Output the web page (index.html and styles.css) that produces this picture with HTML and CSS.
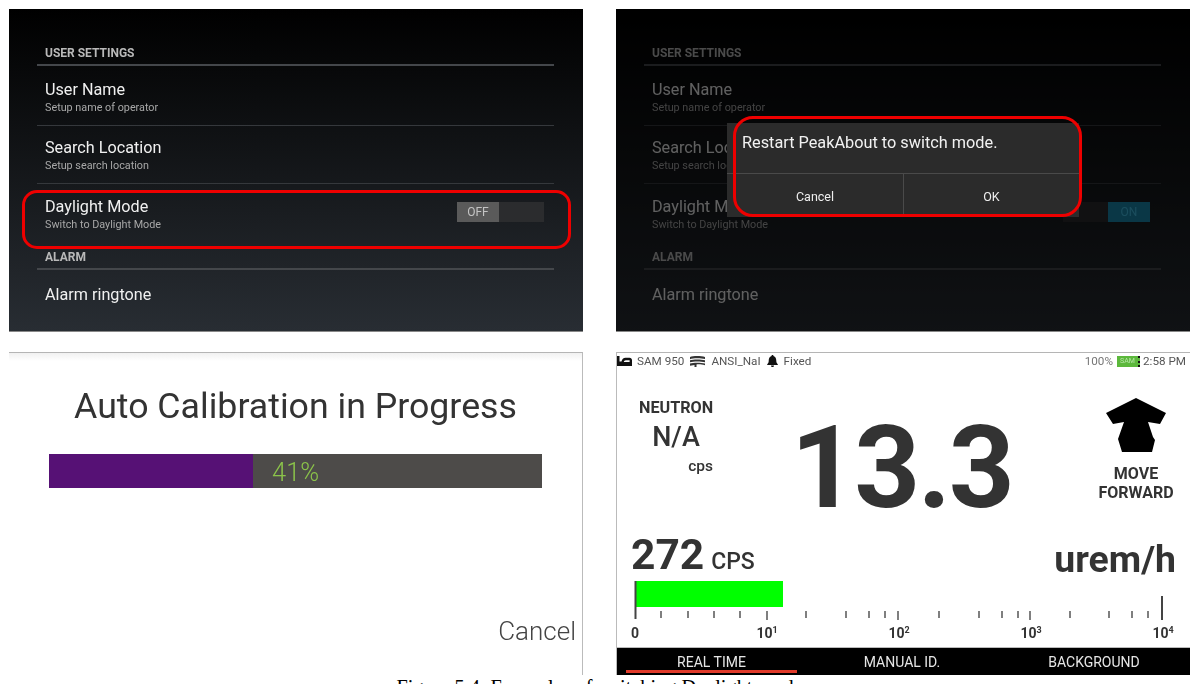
FILE: index.html
```html
<!DOCTYPE html>
<html lang="en">
<head>
<meta charset="utf-8">
<title>Daylight mode</title>
<link rel="stylesheet" href="styles.css">
</head>
<body>
<main class="figure">
  <section class="panel dark">
    <div class="settings">
      <h2 class="section first">USER SETTINGS</h2>
      <div class="row"><div><div class="title">User Name</div><div class="sub">Setup name of operator</div></div></div>
      <div class="row"><div><div class="title">Search Location</div><div class="sub">Setup search location</div></div></div>
      <div class="row plain"><div><div class="title">Daylight Mode</div><div class="sub">Switch to Daylight Mode</div></div>
        <div class="toggle"><span class="thumb">OFF</span></div></div>
      <h2 class="section alarm">ALARM</h2>
      <div class="row plain last"><div class="title">Alarm ringtone</div></div>
    </div>
    <div class="ring ring-row"></div>
  </section>

  <section class="panel dark">
    <div class="settings">
      <h2 class="section first">USER SETTINGS</h2>
      <div class="row"><div><div class="title">User Name</div><div class="sub">Setup name of operator</div></div></div>
      <div class="row"><div><div class="title">Search Location</div><div class="sub">Setup search location</div></div></div>
      <div class="row plain"><div><div class="title">Daylight Mode</div><div class="sub">Switch to Daylight Mode</div></div>
        <div class="toggle on"><span class="thumb">ON</span></div></div>
      <h2 class="section alarm">ALARM</h2>
      <div class="row plain last"><div class="title">Alarm ringtone</div></div>
    </div>
    <div class="scrim"></div>
    <div class="dialog">
      <p class="message">Restart PeakAbout to switch mode.</p>
      <div class="actions"><span class="action">Cancel</span><span class="action">OK</span></div>
    </div>
    <div class="ring ring-dialog"></div>
  </section>

  <section class="panel light calib">
    <h1 class="calib-title">Auto Calibration in Progress</h1>
    <div class="progress"><div class="fill"></div><span class="pct">41%</span></div>
    <div class="cancel">Cancel</div>
  </section>

  <section class="panel light meter">
    <header class="status">
      <div class="status-group">
        <svg class="ico" width="15" height="10" viewBox="0 0 15 10"><path d="M0 0h2.500v5.500h2C5 3.200 6.300 1.800 8.500 1.800h4c1.500 0 2.500 1 2.500 2.500V10H0zM6.800 6h5.800V4.200H8.800C7.700 4.200 7 5 6.800 6z" fill-rule="evenodd" fill="#111"/></svg>
        <span>SAM 950</span>
        <svg class="ico gap" width="17" height="11" viewBox="0 0 17 11"><path d="M1 .9C4-.2 12-.2 16 .9v2.200C12 2 4 2 1 3.200zM1 4.300C4 3.200 12 3.200 16 4.300v1.900C12 5.100 4 5.100 1 6.300zM1 7.500C4 6.400 12 6.400 16 7.500v1.700C12 8.200 9 8.200 7.500 8.600V11H5.500V8.900L1 9.700z" fill="#333"/></svg>
        <span>ANSI_NaI</span>
        <svg class="ico gap-s" width="11" height="12" viewBox="0 0 11 12"><path d="M5.500 0c.6 0 1 .4 1 1C8.500 1.500 9.300 3.500 9.300 6c0 1.500.5 2.400 1.500 3.200v.8H.2v-.8C1.200 8.400 1.700 7.500 1.700 6c0-2.500.8-4.500 2.800-5 0-.6.4-1 1-1zM4 10.500h3C7 11.500 6.300 12 5.500 12S4 11.500 4 10.500z" fill="#111"/></svg>
        <span>Fixed</span>
      </div>
      <div class="status-group">
        <span class="muted">100%</span>
        <span class="battery">SAM</span>
        <span>2:58 PM</span>
      </div>
    </header>

    <div class="hero">
      <div class="neutron">
        <div class="neutron-label">NEUTRON</div>
        <div class="neutron-value">N/A</div>
        <div class="neutron-unit">cps</div>
      </div>
      <div class="dose">13.3</div>
      <div class="move">
        <svg class="arrow" width="60" height="54" viewBox="0 0 60 54"><polygon points="30,0 60,15 54,26 42,24 47,39 49,42 46,54 16,54 12,41 18,24 7,26 0,15" fill="#000"/></svg>
        <div class="move-label">MOVE<br>FORWARD</div>
      </div>
    </div>

    <div class="readout">
      <div class="rate"><span class="rate-num">272</span><span class="rate-unit">CPS</span></div>
      <div class="unit">urem/h</div>
    </div>

    <svg class="scale" width="574" height="40" viewBox="0 0 574 40">
      <rect x="20" y="0" width="147" height="26" fill="#00ff00"/>
      <g stroke="#555" stroke-width="1.500">
        <path d="M45 30v7M72 30v7M98 30v7M124 30v7M190 30v7M230 30v7M253 30v7M269 30v7M323 30v7M363 30v7M386 30v7M402 30v7M454 30v7M493 30v7M516 30v7M532 30v7"/>
        <path d="M151 30v9M282 30v9M414 30v9"/>
      </g>
      <path d="M19.500 0v38M546 15v24" stroke="#444" stroke-width="2"/>
    </svg>
    <div class="scale-labels">
      <span>0</span><span>10<sup>1</sup></span><span>10<sup>2</sup></span><span>10<sup>3</sup></span><span>10<sup>4</sup></span>
    </div>

    <nav class="tabs">
      <span class="tab active">REAL TIME</span>
      <span class="tab">MANUAL ID.</span>
      <span class="tab">BACKGROUND</span>
    </nav>
  </section>
</main>
<p class="caption">Figure 5.4: Examples of switching Daylight mode</p>
</body>
</html>
```
FILE: styles.css
```css
* { box-sizing: border-box; }
html, body { margin: 0; height: 684px; overflow: hidden; background: #fff; }
body { font-family: Roboto, "Liberation Sans", sans-serif; }

.figure {
  display: grid;
  grid-template-columns: 574px 574px;
  grid-template-rows: 323px 323px;
  column-gap: 33px;
  row-gap: 20px;
  padding: 9px 0 0 9px;
}
.panel { position: relative; overflow: hidden; filter: blur(0.45px); }

/* settings screens */
.dark { background: linear-gradient(#000, #282d33); border-bottom: 1px solid #888; }
.settings { padding: 36px 29px 0 28px; }
.section {
  margin: 0 0 2px;
  padding: 0 0 6px 8px;
  height: 21px;
  border-bottom: 2px solid #44474b;
  font-size: 12px;
  line-height: 14px;
  font-weight: 700;
  color: #b9b9b9;
}
.section.first { padding-top: 1px; }
.row {
  display: flex;
  justify-content: space-between;
  height: 58px;
  padding: 12px 10px 0 8px;
  border-bottom: 1px solid #35383c;
}
.row.plain { border-bottom: 0; padding-top: 13px; }
.row.last { height: 40px; padding-top: 13px; }
.title { font-size: 16.2px; line-height: 20px; color: #f0f0f0; }
.sub { font-size: 10.8px; line-height: 16px; color: #a8a8a8; }
.section.alarm { margin-top: 8px; height: 20px; }
.toggle {
  width: 87px;
  height: 20px;
  margin-top: 5px;
  background: #2b2c2e;
  display: flex;
}
.thumb {
  width: 42px;
  background: #5a5a5a;
  color: #c4c4c4;
  font-size: 12px;
  line-height: 20px;
  text-align: center;
}
.toggle.on { justify-content: flex-end; margin-right: 1px; }
.toggle.on .thumb { background: #1a8ab0; color: #43c0e8; }

.ring { position: absolute; border: 3px solid #ee0000; border-radius: 15px; }
.ring-row { left: 13px; top: 181px; width: 549px; height: 59px; }
.ring-dialog { left: 117px; top: 107px; width: 349px; height: 101px; border-radius: 20px; }

.scrim { position: absolute; inset: 0; background: rgba(0, 0, 0, 0.6); }
.dialog {
  position: absolute;
  left: 111px;
  top: 114px;
  width: 352px;
  height: 94px;
  background: #2b2b2b;
  display: flex;
  flex-direction: column;
}
.message {
  margin: 0;
  height: 51px;
  padding: 10px 0 0 15px;
  font-size: 16.3px;
  line-height: 20px;
  color: #f2f2f2;
  border-bottom: 1px solid #4a4a4a;
}
.actions { flex: 1; min-height: 0; display: grid; grid-template-columns: 176px 1fr; }
.action {
  padding-top: 12px;
  font-size: 12.5px;
  line-height: 22px;
  color: #eee;
  text-align: center;
}
.action + .action { border-left: 1px solid #4a4a4a; }

/* calibration */
.light { background: #fff; border-top: 1px solid #b5b5b5; }
.calib {
  border-right: 1px solid #bbb;
  background: linear-gradient(#f1f1f1, #fff 8px);
  display: flex;
  flex-direction: column;
}
.calib-title {
  margin: 30px 0 0;
  font-size: 35.7px;
  line-height: 46px;
  font-weight: 400;
  color: #333;
  text-align: center;
}
.progress {
  display: flex;
  margin: 25px 40px 0;
  height: 34px;
  background: #4d4b49;
}
.fill { width: 204px; background: #561175; }
.pct {
  margin-left: 19px;
  font-size: 25.5px;
  font-weight: 300;
  line-height: 36px;
  color: #8bc34a;
}
.cancel {
  margin: 128px 6px 0 0;
  text-align: right;
  font-size: 26px;
  font-weight: 300;
  line-height: 30px;
  color: #444;
}

/* live meter */
.meter { border-left: 1px solid #bbb; display: flex; flex-direction: column; }
.status {
  flex: none;
  display: flex;
  justify-content: space-between;
  height: 17px;
  padding: 1px 4px 0 0;
  font-size: 11.7px;
  line-height: 14px;
  color: #555;
}
.status-group { display: flex; align-items: center; height: 14px; }
.ico { flex: none; margin-right: 5px; }
.ico.gap { margin-left: 5px; }
.ico.gap-s { margin-left: 6px; margin-right: 6px; }
.muted { color: #777; }
.battery {
  width: 23px;
  height: 11px;
  margin: 0 3px 0 4px;
  background: #5cb83c;
  border-right: 2px dotted #111;
  color: #b7e6a7;
  font-size: 7px;
  line-height: 11px;
  text-align: center;
}

.hero {
  flex: none;
  display: flex;
  justify-content: space-between;
  height: 161px;
  padding: 0 14px 0 22px;
}
.neutron { width: 74px; padding-top: 28px; color: #333; text-align: center; }
.neutron-label { font-size: 16.2px; line-height: 20px; font-weight: 700; white-space: nowrap; }
.neutron-value { margin-top: 4px; font-size: 27px; line-height: 30px; font-weight: 500; }
.neutron-unit { margin-top: 5px; font-size: 15.5px; line-height: 18px; text-align: right; font-weight: 500; }
.dose {
  margin: 30px 6px 0 0;
  font-size: 115px;
  line-height: 135px;
  font-weight: 700;
  letter-spacing: -2.5px;
  color: #333;
}
.move { width: 80px; padding-top: 28px; text-align: center; color: #333; }
.arrow { display: block; margin: 0 auto 13px; }
.move-label { font-size: 16px; line-height: 18.5px; font-weight: 700; }

.readout {
  flex: none;
  display: flex;
  justify-content: space-between;
  align-items: flex-start;
  height: 50px;
  padding: 1px 14px 0 14px;
  color: #333;
}
.rate { line-height: 46px; }
.rate-num { font-size: 42.5px; font-weight: 700; }
.rate-unit { margin-left: 7px; font-size: 23px; font-weight: 500; }
.unit { margin-top: 4px; font-size: 37.4px; line-height: 46px; font-weight: 700; }

.scale { display: block; flex: none; margin-left: -1px; }
.scale-labels {
  flex: none;
  display: flex;
  justify-content: space-between;
  padding: 0 12px 0 3px;
  height: 26px;
  color: #333;
  font-size: 14px;
  line-height: 24px;
  font-weight: 700;
}
.scale-labels span { width: 30px; text-align: center; }
.scale-labels sup { font-size: 9px; line-height: 0; vertical-align: 5px; }

.tabs {
  flex: 1;
  min-height: 0;
  display: grid;
  grid-template-columns: 189px 192px 1fr;
  background: #000;
  border-top: 1px solid #bbb;
}
.tab {
  position: relative;
  color: #e6e6e6;
  font-size: 14px;
  line-height: 28px;
  text-align: center;
}
.tab.active::after {
  content: "";
  position: absolute;
  left: 9px;
  bottom: 3px;
  width: 171px;
  height: 3px;
  background: #e03a2a;
}

.caption {
  margin: 1px 0 0;
  text-align: center;
  font-family: "Liberation Serif", serif;
  font-size: 20.3px;
  line-height: 22px;
  color: #000;
}
```
